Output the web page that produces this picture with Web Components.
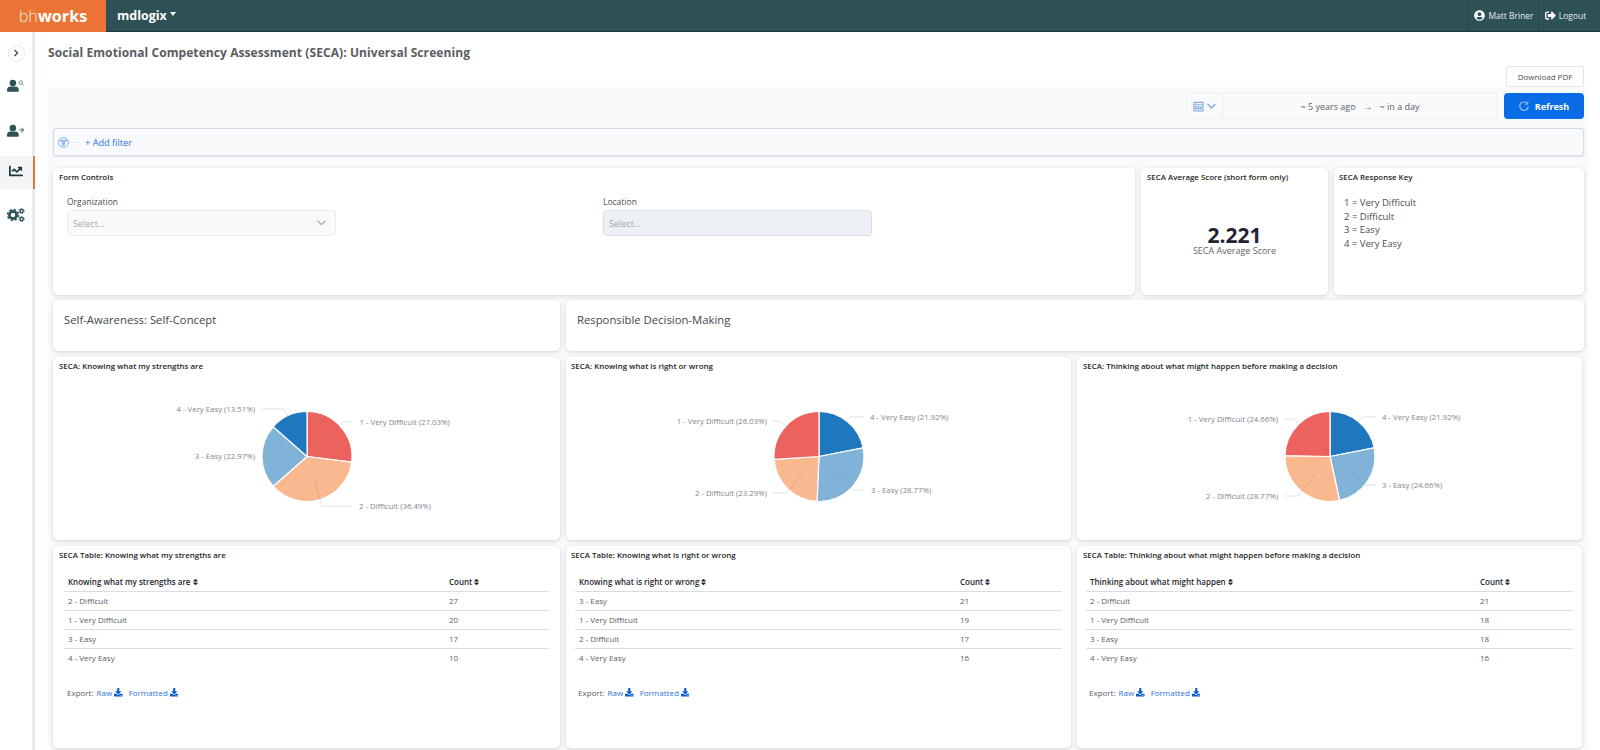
<!DOCTYPE html>
<html lang="en">
<head>
<meta charset="utf-8">
<title>SECA: Universal Screening</title>
<style>
  html, body { margin: 0; height: 100%; overflow: hidden; background: #fff; }
  body { font-family: "Open Sans", "Noto Sans", sans-serif; color: #444; }
</style>
</head>
<body>
<bh-app>
  <bh-topbar slot="top" org="mdlogix" user="Matt Briner"></bh-topbar>
  <bh-sidebar slot="side"></bh-sidebar>

  <page-header title="Social Emotional Competency Assessment (SECA): Universal Screening"></page-header>
  <seca-dashboard>
    <date-filter></date-filter>

    <div class="row r1" style="display:grid;grid-template-columns:1082px 187px 250px;gap:6px;height:127px;margin-top:12px">
      <seca-card heading="Form Controls"><form-controls></form-controls></seca-card>
      <seca-card heading="SECA Average Score (short form only)"><score-value value="2.221" label="SECA Average Score"></score-value></seca-card>
      <seca-card heading="SECA Response Key" style="--title-left:5px"><response-key items="1 = Very Difficult|2 = Difficult|3 = Easy|4 = Very Easy"></response-key></seca-card>
    </div>

    <div class="row r2" style="display:grid;grid-template-columns:507px 1018px;gap:6px;height:51px;margin-top:5px">
      <section-card>Self-Awareness: Self-Concept</section-card>
      <section-card>Responsible Decision-Making</section-card>
    </div>

    <div class="row r3" style="display:grid;grid-template-columns:507px 505px 505px;gap:6px;height:183px;margin-top:6px">
      <seca-card heading="SECA: Knowing what my strengths are"><seca-pie id="pie1"></seca-pie></seca-card>
      <seca-card heading="SECA: Knowing what is right or wrong" style="--title-left:5px"><seca-pie id="pie2"></seca-pie></seca-card>
      <seca-card heading="SECA: Thinking about what might happen before making a decision"><seca-pie id="pie3"></seca-pie></seca-card>
    </div>

    <div class="row r4" style="display:grid;grid-template-columns:507px 505px 505px;gap:6px;height:202px;margin-top:6px">
      <seca-card heading="SECA Table: Knowing what my strengths are"><seca-table column="Knowing what my strengths are" first="381" inset="11" rows="2 - Difficult:27|1 - Very Difficult:20|3 - Easy:17|4 - Very Easy:10"></seca-table></seca-card>
      <seca-card heading="SECA Table: Knowing what is right or wrong" style="--title-left:5px"><seca-table column="Knowing what is right or wrong" first="381" inset="9" rows="3 - Easy:21|1 - Very Difficult:19|2 - Difficult:17|4 - Very Easy:16"></seca-table></seca-card>
      <seca-card heading="SECA Table: Thinking about what might happen before making a decision"><seca-table column="Thinking about what might happen" first="390" inset="9" rows="2 - Difficult:21|1 - Very Difficult:18|3 - Easy:18|4 - Very Easy:16"></seca-table></seca-card>
    </div>
  </seca-dashboard>
</bh-app>

<script>
const icons = {
  userCircle: '<svg viewBox="0 0 496 512"><path fill="currentColor" d="M248 8C111 8 0 119 0 256s111 248 248 248 248-111 248-248S385 8 248 8zm0 96c48.6 0 88 39.4 88 88s-39.4 88-88 88-88-39.4-88-88 39.4-88 88-88zm0 344c-58.7 0-111.3-26.6-146.5-68.2 18.8-35.4 55.6-59.8 98.5-59.8 2.4 0 4.8.4 7.1 1.1 13 4.2 26.6 6.9 40.9 6.9 14.3 0 28-2.7 40.9-6.9 2.3-.7 4.7-1.1 7.1-1.1 42.9 0 79.7 24.4 98.5 59.8C359.3 421.4 306.7 448 248 448z"/></svg>',
  signOut: '<svg viewBox="0 0 512 512"><path fill="currentColor" d="M497 273L329 441c-15 15-41 4.5-41-17v-96H152c-13.3 0-24-10.7-24-24v-96c0-13.3 10.7-24 24-24h136V88c0-21.4 25.9-32 41-17l168 168c9.3 9.4 9.3 24.6 0 34zM192 436v-40c0-6.6-5.4-12-12-12H96c-17.7 0-32-14.3-32-32V160c0-17.7 14.3-32 32-32h84c6.6 0 12-5.4 12-12V76c0-6.6-5.4-12-12-12H96c-53 0-96 43-96 96v192c0 53 43 96 96 96h84c6.6 0 12-5.4 12-12z"/></svg>',
  download: '<svg viewBox="0 0 512 512"><path fill="currentColor" d="M216 0h80c13.3 0 24 10.7 24 24v168h87.7c17.8 0 26.7 21.5 14.1 34.1L269.7 378.3c-7.5 7.5-19.8 7.5-27.3 0L90.1 226.1c-12.6-12.6-3.7-34.1 14.1-34.1H192V24c0-13.3 10.7-24 24-24zm296 376v112c0 13.3-10.7 24-24 24H24c-13.3 0-24-10.7-24-24V376c0-13.3 10.7-24 24-24h146.7l49 49c20.1 20.1 52.5 20.1 72.6 0l49-49H488c13.3 0 24 10.7 24 24zm-124 88c0-11-9-20-20-20s-20 9-20 20 9 20 20 20 20-9 20-20zm64 0c0-11-9-20-20-20s-20 9-20 20 9 20 20 20 20-9 20-20z"/></svg>',
  sort: '<svg viewBox="0 0 320 512"><path fill="currentColor" d="M41 288h238c21.4 0 32.1 25.9 17 41L177 448c-9.4 9.4-24.6 9.4-33.9 0L24 329c-15.1-15.1-4.4-41 17-41zm255-105L177 64c-9.4-9.4-24.6-9.4-33.9 0L24 183c-15.1 15.1-4.4 41 17 41h238c21.4 0 32.1-25.9 17-41z"/></svg>',
  chart: '<svg viewBox="0 0 512 512"><path fill="currentColor" d="M496 384H64V80c0-8.84-7.16-16-16-16H16C7.16 64 0 71.16 0 80v336c0 17.67 14.33 32 32 32h464c8.84 0 16-7.16 16-16v-32c0-8.84-7.16-16-16-16zM464 96H345.94c-21.38 0-32.09 25.85-16.97 40.97l32.4 32.4L288 242.75l-73.37-73.37c-12.5-12.5-32.76-12.5-45.25 0l-68.69 68.69c-6.25 6.25-6.25 16.38 0 22.63l22.62 22.62c6.25 6.25 16.38 6.25 22.63 0L192 237.25l73.37 73.37c12.5 12.5 32.76 12.5 45.25 0l96-96 32.4 32.4c15.12 15.12 40.97 4.41 40.97-16.97V112c0-8.84-7.16-16-16-16z"/></svg>',
  userSearch: '<svg viewBox="0 0 20 14"><circle cx="6.5" cy="4.2" r="3.6" fill="currentColor"/><path fill="currentColor" d="M0 13.2v-1.6C0 9.3 1.8 8 4 8h5c2.2 0 4 1.3 4 3.6v1.6c0 .5-.3.8-.8.8H.8c-.5 0-.8-.3-.8-.8z"/><circle cx="15.3" cy="3.6" r="1.9" fill="none" stroke="currentColor" stroke-width="1" opacity=".7"/><path d="M16.7 5l1.7 1.7" stroke="currentColor" stroke-width="1.1" opacity=".7"/></svg>',
  userArrow: '<svg viewBox="0 0 20 14"><circle cx="6.5" cy="4.2" r="3.6" fill="currentColor"/><path fill="currentColor" d="M0 13.2v-1.6C0 9.3 1.8 8 4 8h5c2.2 0 4 1.3 4 3.6v1.6c0 .5-.3.8-.8.8H.8c-.5 0-.8-.3-.8-.8z"/><path d="M13.5 6.5h5M16 4l2.5 2.5L16 9" fill="none" stroke="currentColor" stroke-width="1.2" opacity=".75"/></svg>',
  cogs: '<svg viewBox="0 0 18 14"><circle cx="6" cy="7" r="3.6" fill="none" stroke="currentColor" stroke-width="2.6"/><circle cx="6" cy="7" r="5.4" fill="none" stroke="currentColor" stroke-width="1.6" stroke-dasharray="2.2 2.04"/><g fill="none" stroke="currentColor"><circle cx="14.6" cy="3" r="1.6" stroke-width="1.4"/><circle cx="14.6" cy="3" r="2.6" stroke-width=".9" stroke-dasharray="1.2 1"/><circle cx="14.6" cy="11" r="1.6" stroke-width="1.4"/><circle cx="14.6" cy="11" r="2.6" stroke-width=".9" stroke-dasharray="1.2 1"/></g></svg>'
};

class BhApp extends HTMLElement {
  constructor() {
    super();
    this.attachShadow({ mode: 'open' });
    this.shadowRoot.innerHTML = `
      <style>
        :host { display: flex; flex-direction: column; width: 1600px; height: 750px; overflow: hidden; }
        .body { display: flex; flex: 1; min-height: 0; }
        main { flex: 1; min-width: 0; display: flex; flex-direction: column; }
      </style>
      <slot name="top"></slot>
      <div class="body">
        <slot name="side"></slot>
        <main><slot></slot></main>
      </div>
    `;
  }
}

class BhTopbar extends HTMLElement {
  constructor() {
    super();
    this.attachShadow({ mode: 'open' });
  }

  connectedCallback() {
    const org = this.getAttribute('org') || '';
    const user = this.getAttribute('user') || '';
    this.shadowRoot.innerHTML = `
      <style>
        :host { display: flex; height: 32px; box-sizing: border-box; background: #2d5154; border-bottom: 1px solid #1f3a3d; color: #fff; align-items: stretch; }
        .logo { width: 106px; margin-bottom: -1px; background: #e97435; display: flex; align-items: center; justify-content: center; box-sizing: border-box; font-size: 16.2px; color: #fbe3d6; font-weight: 300; }
        .logo b { font-weight: 700; color: #fff; }
        .org { margin-left: 11px; display: flex; align-items: center; font-size: 12.5px; font-weight: 700; }
        .org i { margin-left: 3px; margin-top: -3px; border: 3.5px solid transparent; border-top: 4px solid #fff; border-bottom: 0; }
        .spacer { flex: 1; }
        .nav { display: flex; align-items: center; justify-content: center; gap: 3px; border-left: 1px solid #274649; font-size: 8.5px; color: #e6eeee; box-sizing: border-box; }
        .nav svg { width: 11px; height: 11px; display: block; color: #fff; }
        .user { width: 70px; padding-left: 1px; }
        .out { width: 62px; padding-right: 8px; }
      </style>
      <div class="logo"><span>bh<b>works</b></span></div>
      <div class="org">${org}<i></i></div>
      <div class="spacer"></div>
      <div class="nav user">${icons.userCircle}<span>${user}</span></div>
      <div class="nav out">${icons.signOut}<span>Logout</span></div>
    `;
  }
}

class BhSidebar extends HTMLElement {
  constructor() {
    super();
    this.attachShadow({ mode: 'open' });
    this.shadowRoot.innerHTML = `
      <style>
        :host { display: block; width: 35px; flex: none; box-sizing: border-box; border-right: 3px solid #e3efef; color: #2d5154; }
        .toggle { height: 42px; display: flex; align-items: center; justify-content: center; }
        .toggle span { width: 15px; height: 15px; border: 1px solid #dfe9e9; border-radius: 50%; display: flex; align-items: center; justify-content: center; }
        .toggle svg { width: 8px; height: 8px; }
        .item { display: flex; align-items: center; justify-content: center; height: 22px; }
        .item svg { width: 18px; height: 13px; display: block; }
        .i2 { margin-top: 23px; }
        .active { margin-top: 15px; height: 30px; padding-bottom: 3px; background: #f3f5f6; margin-right: -3px; border-right: 2px solid #e97435; padding-right: 1px; }
        .active svg { width: 14px; height: 14px; color: #1f3a3d; }
        .i4 { margin-top: 15px; }
        .i4 svg { width: 18px; height: 14px; }
      </style>
      <div class="toggle"><span><svg viewBox="0 0 8 8"><path d="M2.5 1l3 3-3 3" fill="none" stroke="#2d5154" stroke-width="1.3"/></svg></span></div>
      <div class="item">${icons.userSearch}</div>
      <div class="item i2">${icons.userArrow}</div>
      <div class="item active">${icons.chart}</div>
      <div class="item i4">${icons.cogs}</div>
    `;
  }
}

class PageHeader extends HTMLElement {
  constructor() {
    super();
    this.attachShadow({ mode: 'open' });
  }

  connectedCallback() {
    this.shadowRoot.innerHTML = `
      <style>
        :host { display: block; height: 55px; padding-left: 13px; padding-right: 16px; }
        h1 { margin: 0; padding-top: 12px; font-size: 12px; line-height: 18px; font-weight: 700; color: #5a5d61; letter-spacing: .08px; }
        .row { display: flex; justify-content: flex-end; margin-top: 4px; }
        button { width: 78px; height: 21px; padding: 0; background: #fff; border: 1px solid #dde7e8; border-radius: 2px; font: 400 8px "Open Sans", sans-serif; color: #4a4d52; }
      </style>
      <h1>${this.getAttribute('title')}</h1>
      <div class="row"><button>Download PDF</button></div>
    `;
    this.removeAttribute('title');
  }
}

class SecaDashboard extends HTMLElement {
  constructor() {
    super();
    this.attachShadow({ mode: 'open' });
    this.shadowRoot.innerHTML = `
      <style>
        :host { display: block; flex: 1; margin-left: 13px; margin-right: 12px; padding: 6px 4px 0 5px; background: #f8fafc; }
      </style>
      <slot></slot>
    `;
  }
}

class DateFilter extends HTMLElement {
  constructor() {
    super();
    this.attachShadow({ mode: 'open' });
    this.shadowRoot.innerHTML = `
      <style>
        :host { display: block; font-size: 9px; }
        .top { display: flex; justify-content: flex-end; gap: 6px; height: 26px; }
        .range { width: 312px; box-sizing: border-box; display: flex; background: #f9fafc; border: 1px solid #edf0f4; border-radius: 3px; }
        .cal { width: 35px; flex: none; display: flex; align-items: center; justify-content: center; gap: 3px; border-right: 1px solid #e6eaef; color: #6f9fd8; }
        .cal svg { display: block; }
        .txt { flex: 1; display: flex; align-items: center; justify-content: center; color: #5f636b; white-space: pre; }
        .txt b { font-weight: 700; font-size: 10px; padding: 0 7px; }
        .refresh { width: 80px; background: #0a6ce6; color: #fff; border-radius: 4px; display: flex; align-items: center; justify-content: center; gap: 6px; font-weight: 700; font-size: 9px; }
        .refresh svg { width: 10px; height: 10px; }
        .filter { margin-top: 9px; height: 28px; box-sizing: border-box; border: 1px solid #d3dbe9; border-radius: 3px; background: #f8fafc; box-shadow: 0 1px 2px rgba(0,0,0,.1); display: flex; align-items: center; padding-left: 4px; }
        .filter svg { width: 11px; height: 11px; display: block; }
        .dash { width: 6px; height: 1px; background: #e2e6ec; margin: 0 6px 0 4px; }
        .add { color: #2f6fe0; font-size: 9.2px; }
      </style>
      <div class="top">
        <div class="range">
          <div class="cal">
            <svg width="11" height="12" viewBox="0 0 12 12" fill="none" stroke="currentColor"><rect x="1" y="2" width="10" height="9.5"/><path d="M1 4.5h10M3.5 1v2M8.5 1v2M3.5 6v4M6 6v4M8.5 6v4M1.5 7h9M1.5 9h9" stroke-width=".8"/></svg>
            <svg width="9" height="6" viewBox="0 0 9 6" fill="none" stroke="currentColor" stroke-width="1.1"><path d="M.5 1l4 4 4-4"/></svg>
          </div>
          <div class="txt">~ 5 years ago<b>→</b>~ in a day</div>
        </div>
        <div class="refresh">
          <svg viewBox="0 0 12 12" fill="none" stroke="#9cc3f5" stroke-width="1.4"><path d="M10 3.2A5 5 0 1 0 11 6.5"/><path d="M10.5 .8v3h-3" stroke-width="1.2"/></svg>
          <span>Refresh</span>
        </div>
      </div>
      <div class="filter">
        <svg viewBox="0 0 12 12" fill="none" stroke="#6ea4e4"><circle cx="6" cy="6" r="5.3"/><path d="M2.5 3.5h7L7 6.5v2.5H5V6.5z" fill="#9cc3f0" stroke-width=".7"/></svg>
        <span class="dash"></span>
        <span class="add">+ Add filter</span>
      </div>
    `;
  }
}

class SecaCard extends HTMLElement {
  constructor() {
    super();
    this.attachShadow({ mode: 'open' });
  }

  connectedCallback() {
    this.shadowRoot.innerHTML = `
      <style>
        :host { display: flex; flex-direction: column; min-width: 0; background: #fff; border-radius: 5px; box-shadow: 0 1px 4px rgba(0,0,0,.16); overflow: hidden; }
        h3 { margin: 0; height: 18px; padding: 3px 0 0 var(--title-left, 6px); box-sizing: border-box; font-size: 7.9px; line-height: 12px; font-weight: 600; color: #1d1f23; white-space: nowrap; flex: none; }
        .body { flex: 1; min-height: 0; }
      </style>
      <h3>${this.getAttribute('heading')}</h3>
      <div class="body"><slot></slot></div>
    `;
  }
}

class SectionCard extends HTMLElement {
  constructor() {
    super();
    this.attachShadow({ mode: 'open' });
    this.shadowRoot.innerHTML = `
      <style>
        :host { display: block; background: #fff; border-radius: 5px; box-shadow: 0 1px 4px rgba(0,0,0,.16); padding: 11px 0 0 11px; font-size: 11.3px; line-height: 18px; color: #43464b; }
      </style>
      <slot></slot>
    `;
  }
}

class FormControls extends HTMLElement {
  constructor() {
    super();
    this.attachShadow({ mode: 'open' });
    this.shadowRoot.innerHTML = `
      <style>
        :host { display: flex; padding: 10px 0 0 14px; gap: 267px; font-size: 8.5px; }
        label { display: block; line-height: 12px; color: #4c4f55; }
        .sel { margin-top: 2px; width: 269px; height: 26px; box-sizing: border-box; border: 1px solid #e8ebf2; border-radius: 4px; background: #f9fafc; display: flex; align-items: center; justify-content: space-between; padding: 0 9px 0 5px; color: #a2a7b0; font-size: 9px; }
        .dis { background: #edf0f5; border-color: #d9dfe9; }
      </style>
      <div>
        <label>Organization</label>
        <div class="sel"><span>Select...</span><svg width="9" height="6" viewBox="0 0 9 6" fill="none" stroke="#6b7078" stroke-width="1"><path d="M.6 .8l3.9 3.9L8.4 .8"/></svg></div>
      </div>
      <div>
        <label>Location</label>
        <div class="sel dis"><span>Select...</span></div>
      </div>
    `;
  }
}

class ScoreValue extends HTMLElement {
  constructor() {
    super();
    this.attachShadow({ mode: 'open' });
  }

  connectedCallback() {
    this.shadowRoot.innerHTML = `
      <style>
        :host { display: block; text-align: center; padding-top: 39px; }
        .v { font-size: 21px; line-height: 20px; font-weight: 700; color: #1f2533; }
        .l { font-size: 9px; line-height: 10px; margin-top: 1px; color: #62666d; }
      </style>
      <div class="v">${this.getAttribute('value')}</div>
      <div class="l">${this.getAttribute('label')}</div>
    `;
  }
}

class ResponseKey extends HTMLElement {
  constructor() {
    super();
    this.attachShadow({ mode: 'open' });
  }

  connectedCallback() {
    const lines = this.getAttribute('items').split('|').map(s => `<div>${s}</div>`).join('');
    this.shadowRoot.innerHTML = `
      <style>
        :host { display: block; padding: 10px 0 0 10px; font-size: 9.5px; line-height: 13.5px; color: #484b52; }
      </style>
      ${lines}
    `;
  }
}

// slices go clockwise from 12 o'clock, coordinates are the page ones (viewBox does the offset)
class SecaPie extends HTMLElement {
  constructor() {
    super();
    this.attachShadow({ mode: 'open' });
  }

  set config(c) {
    const colors = { 1: '#ec625f', 2: '#f9b88e', 3: '#81b2d7', 4: '#1f77c0' };
    const total = c.slices.reduce((a, s) => a + s.pct, 0);
    const r = 45;
    let angle = 0;
    let wedges = '';
    let lines = '';
    let labels = '';
    for (const s of c.slices) {
      const a0 = angle;
      angle += s.pct / total * Math.PI * 2;
      const x0 = c.cx + r * Math.sin(a0), y0 = c.cy - r * Math.cos(a0);
      const x1 = c.cx + r * Math.sin(angle), y1 = c.cy - r * Math.cos(angle);
      const big = angle - a0 > Math.PI ? 1 : 0;
      wedges += `<path d="M${c.cx} ${c.cy}L${x0.toFixed(2)} ${y0.toFixed(2)}A${r} ${r} 0 ${big} 1 ${x1.toFixed(2)} ${y1.toFixed(2)}Z" fill="${colors[s.id]}"/>`;
      lines += `<polyline points="${s.line}"/>`;
      labels += `<text x="${s.x}" y="${s.y}" text-anchor="${s.anchor}" dominant-baseline="central">${s.text}</text>`;
    }
    this.shadowRoot.innerHTML = `
      <style>
        :host { display: block; height: 100%; }
        svg { display: block; width: 100%; height: 100%; }
        path { stroke: #fff; stroke-width: 1.2; stroke-linejoin: round; }
        polyline { fill: none; stroke: rgba(120,124,135,.3); stroke-width: .8; }
        text { font: 7.8px "Open Sans", sans-serif; fill: #82858f; }
      </style>
      <svg viewBox="${c.box}" preserveAspectRatio="xMinYMin slice">${wedges}${lines}${labels}</svg>
    `;
  }
}

class SecaTable extends HTMLElement {
  constructor() {
    super();
    this.attachShadow({ mode: 'open' });
  }

  connectedCallback() {
    const rows = this.getAttribute('rows').split('|').map(r => {
      const [name, count] = r.split(':');
      return `<tr><td>${name}</td><td>${count}</td></tr>`;
    }).join('');
    const first = this.getAttribute('first');
    const inset = this.getAttribute('inset');
    this.shadowRoot.innerHTML = `
      <style>
        :host { display: block; padding: 4px ${inset}px 0; font-size: 8px; }
        table { width: 100%; border-collapse: collapse; table-layout: fixed; }
        th { text-align: left; font-weight: 600; height: 23px; box-sizing: border-box; padding: 4px 4px 0; color: #22262e; border-bottom: 1px solid #d7dce8; white-space: nowrap; }
        th:first-child { width: ${first}px; }
        th svg { width: 5px; height: 8px; vertical-align: -1px; }
        td { height: 19px; box-sizing: border-box; padding: 0 4px; color: #5b5e65; border-bottom: 1px solid #d7dce8; }
        tr:last-child td { border-bottom: 0; }
        .export { margin-top: 20px; padding-left: 3px; color: #5b5e65; display: flex; align-items: center; }
        a { color: #2f74dd; display: flex; align-items: center; gap: 2px; }
        a svg { width: 8.5px; height: 8.5px; color: #0a5cd0; }
        .raw { margin-left: 3px; }
        .fmt { margin-left: 6px; }
      </style>
      <table>
        <thead><tr><th>${this.getAttribute('column')} ${icons.sort}</th><th>Count ${icons.sort}</th></tr></thead>
        <tbody>${rows}</tbody>
      </table>
      <div class="export"><span>Export:</span><a class="raw">Raw ${icons.download}</a><a class="fmt">Formatted ${icons.download}</a></div>
    `;
  }
}

customElements.define('bh-app', BhApp);
customElements.define('bh-topbar', BhTopbar);
customElements.define('bh-sidebar', BhSidebar);
customElements.define('page-header', PageHeader);
customElements.define('seca-dashboard', SecaDashboard);
customElements.define('date-filter', DateFilter);
customElements.define('seca-card', SecaCard);
customElements.define('section-card', SectionCard);
customElements.define('form-controls', FormControls);
customElements.define('score-value', ScoreValue);
customElements.define('response-key', ResponseKey);
customElements.define('seca-pie', SecaPie);
customElements.define('seca-table', SecaTable);

document.getElementById('pie1').config = {
  box: '53 375 507 165', cx: 307, cy: 456.5,
  slices: [
    { id: 1, pct: 27.03, text: '1 - Very Difficult (27.03%)', x: 359.5, y: 422, anchor: 'start', line: '352,422 342.5,422 323,442' },
    { id: 2, pct: 36.49, text: '2 - Difficult (36.49%)', x: 359, y: 506, anchor: 'start', line: '352,506 322,506 314,478' },
    { id: 3, pct: 22.97, text: '3 - Easy (22.97%)', x: 255, y: 456, anchor: 'end', line: '262,456 284,456' },
    { id: 4, pct: 13.51, text: '4 - Very Easy (13.51%)', x: 255, y: 409, anchor: 'end', line: '262,409 284,409 297,434' }
  ]
};
document.getElementById('pie2').config = {
  box: '566 375 505 165', cx: 819, cy: 456.5,
  slices: [
    { id: 4, pct: 21.92, text: '4 - Very Easy (21.92%)', x: 870, y: 417, anchor: 'start', line: '864,417 850,417 833,437' },
    { id: 3, pct: 28.77, text: '3 - Easy (28.77%)', x: 871, y: 490, anchor: 'start', line: '864,490 853,490 836,472' },
    { id: 2, pct: 23.29, text: '2 - Difficult (23.29%)', x: 767, y: 493, anchor: 'end', line: '773,493 787,493 803,472' },
    { id: 1, pct: 26.03, text: '1 - Very Difficult (26.03%)', x: 767, y: 421, anchor: 'end', line: '773,421 780,421 802,441' }
  ]
};
document.getElementById('pie3').config = {
  box: '1077 375 505 165', cx: 1330, cy: 456.5,
  slices: [
    { id: 4, pct: 21.92, text: '4 - Very Easy (21.92%)', x: 1382, y: 417, anchor: 'start', line: '1376,417 1362,417 1344.5,438' },
    { id: 3, pct: 24.66, text: '3 - Easy (24.66%)', x: 1382, y: 485, anchor: 'start', line: '1376,485 1364,485 1349.5,469' },
    { id: 2, pct: 28.77, text: '2 - Difficult (28.77%)', x: 1278, y: 496, anchor: 'end', line: '1285,496 1298,496 1316,474' },
    { id: 1, pct: 24.66, text: '1 - Very Difficult (24.66%)', x: 1278, y: 419, anchor: 'end', line: '1285,419 1294,419 1314,440' }
  ]
};
</script>
</body>
</html>
